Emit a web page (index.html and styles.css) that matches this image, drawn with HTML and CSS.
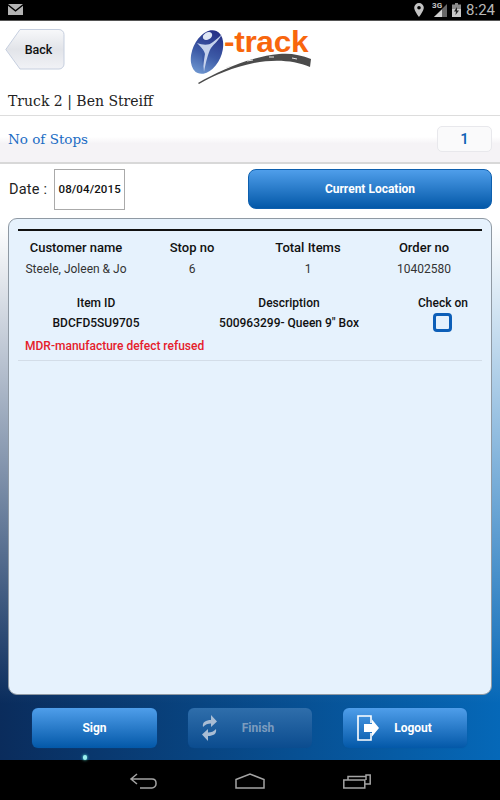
FILE: index.html
```html
<!DOCTYPE html>
<html lang="en">
<head>
<meta charset="utf-8">
<title>i-track</title>
<link rel="stylesheet" href="styles.css">
</head>
<body>
<div class="screen">
  <header class="status">
    <svg class="mail" width="15" height="12" viewBox="0 0 15 12"><path d="M0 0h15l-7.500 6z" fill="#b4b4b4"/><path d="M0 1.800l7.500 6 7.500-6V11H0z" fill="#b4b4b4"/></svg>
    <div class="status-right">
      <svg width="10" height="14" viewBox="0 0 10 14"><path fill-rule="evenodd" d="M5 0a4.800 4.800 0 0 1 4.800 4.800C9.800 8 5 14 5 14S.2 8 .2 4.800A4.800 4.800 0 0 1 5 0zm0 3a1.800 1.800 0 1 0 0 3.600A1.800 1.800 0 0 0 5 3z" fill="#c4c4c4"/></svg>
      <span class="signal"><span class="net">3G</span><svg width="13" height="13" viewBox="0 0 13 13"><path d="M13 0v13H0z" fill="#666"/><path d="M8 5.500V13H0z" fill="#d0d0d0"/></svg></span>
      <svg width="9" height="14" viewBox="0 0 9 14"><path d="M3 0h3v1.500h3V14H0V1.500h3z" fill="#8a8a8a"/><path d="M0 6h9v8H0z" fill="#c8c8c8"/><path d="M5 4L2 8.500h2L3.500 12 7 7.500H5z" fill="#222"/></svg>
      <span class="time">8:24</span>
    </div>
  </header>

  <section class="top">
    <button class="back">
      <svg class="back-shape" width="60" height="41" viewBox="0 0 60 41"><defs><linearGradient id="bk" x1="0" y1="0" x2="0" y2="1"><stop offset="0" stop-color="#f7f8fa"/><stop offset=".5" stop-color="#e2e4e9"/><stop offset="1" stop-color="#f1f2f6"/></linearGradient></defs><path d="M15 .5H54a5 5 0 0 1 5 5V35a5 5 0 0 1-5 5H15L.8 20.500z" fill="url(#bk)" stroke="#c6cfdf"/></svg>
      <span class="back-label">Back</span>
    </button>
    <div class="logo">
      <svg width="124" height="58" viewBox="0 0 124 58">
        <defs>
          <linearGradient id="orb" x1="0" y1="0" x2="0" y2="1"><stop offset="0" stop-color="#262f86"/><stop offset=".55" stop-color="#3c5aa6"/><stop offset="1" stop-color="#6d95cf"/></linearGradient>
        </defs>
        <ellipse cx="18" cy="25" rx="14.500" ry="23" transform="rotate(24 18 25)" fill="url(#orb)"/>
        <ellipse cx="18.500" cy="9" rx="5" ry="3.600" transform="rotate(-30 18.500 9)" fill="#dfe6f5"/>
        <path d="M8 16c6 2 11 3 16-1 4-3 7-6 9-8-2 5-8 10-11 14-3 5-5 14-7 24-1-8-1-14 0-19-1-4-4-7-7-10z" fill="#c5d2ec"/>
        <path d="M10.500 19c3 3 5 5 5.500 8l-2 12c-.5-7-.5-13-3.500-20z" fill="#3c5aa6"/>
        <path d="M9 56C30 44 60 30 90 27c12-1 22 1 32 5l-1 8C105 33 85 32 65 36 45 40 25 48 10 57z" fill="#4b4b4b"/>
        <path d="M37 41l5-2M58 34l6-1M80 30h5M103 31l5 1" stroke="#e8e8e8" stroke-width="1"/>
      </svg>
      <span class="logo-text">-track</span>
    </div>
  </section>

  <h1 class="title">Truck 2 | Ben Streiff</h1>

  <section class="stops">
    <span class="stops-label">No of Stops</span>
    <span class="stops-value">1</span>
  </section>

  <div class="content">
    <section class="date-row">
      <div class="date-group">
        <span class="date-label">Date :</span>
        <span class="date-input">08/04/2015</span>
      </div>
      <button class="btn btn-location">Current Location</button>
    </section>

    <main class="card">
      <div class="grid-order">
        <span class="head">Customer name</span>
        <span class="head">Stop no</span>
        <span class="head">Total Items</span>
        <span class="head">Order no</span>
        <span class="val">Steele, Joleen &amp; Jo</span>
        <span class="val">6</span>
        <span class="val">1</span>
        <span class="val">10402580</span>
      </div>
      <div class="item">
        <div class="grid-item">
          <span class="sub">Item ID</span>
          <span class="sub">Description</span>
          <span class="sub">Check on</span>
          <span class="sub">BDCFD5SU9705</span>
          <span class="sub">500963299- Queen 9" Box</span>
          <span class="check"></span>
        </div>
        <p class="defect">MDR-manufacture defect refused</p>
      </div>
    </main>

    <footer class="actions">
      <button class="btn btn-action">Sign</button>
      <button class="btn btn-action btn-off">
        <svg class="btn-icon btn-icon-sync" width="17" height="26" viewBox="0 0 17 26"><path d="M2 12C1 7 5 5 10 5V0l6 6.500-6 5.500V8.500c-3 0-6 1-8 3.500zM15 14c1 5-3 7-8 7v5l-6-6.500L7 14v3.500c3 0 6-1 8-3.500z" fill="#a9bdd4"/></svg>
        <span>Finish</span>
      </button>
      <button class="btn btn-action btn-logout">
        <svg class="btn-icon btn-icon-out" width="24" height="26" viewBox="0 0 24 26"><path d="M14 8V1H1v24h13v-7" fill="none" stroke="#fff" stroke-width="1.600"/><path d="M7 9h8V4.500L22 13l-7 8.500V17H7z" fill="#fff"/></svg>
        <span>Logout</span>
      </button>
      <span class="dot"></span>
    </footer>
  </div>

  <nav class="nav">
    <svg width="28" height="16" viewBox="0 0 28 16"><path d="M8 1L2 6l6 5M2 6h21c3 0 4 2 4 4v1c0 2-2 4-4 4H11" fill="none" stroke="#a4a4a4" stroke-width="1.500"/></svg>
    <svg width="30" height="16" viewBox="0 0 30 16"><path d="M1 6.500L15 1l14 5.500V15H1z" fill="none" stroke="#a4a4a4" stroke-width="1.500"/></svg>
    <svg width="28" height="15" viewBox="0 0 28 15"><path d="M.8 6h21v8H.8zM5 6V2.500h18V6M23 3.500V1h4.200v9h-5" fill="none" stroke="#a4a4a4" stroke-width="1.500"/></svg>
  </nav>
</div>
</body>
</html>
```

FILE: styles.css
```css
* { box-sizing: border-box; }
html, body { margin: 0; padding: 0; }
body { font-family: Roboto, "Liberation Sans", sans-serif; background: #000; }
button { font-family: inherit; border: 0; padding: 0; }

.screen { width: 500px; height: 800px; display: flex; flex-direction: column; overflow: hidden; background: #fff; }

.status { height: 21px; flex: none; background: #000; border-bottom: 1px solid #555; display: flex; align-items: center; justify-content: space-between; padding: 0 5px 1px 8px; }
.status-right { display: flex; align-items: center; gap: 5px; }
.signal { position: relative; display: block; width: 14px; height: 14px; margin-left: 4px; }
.signal svg { position: absolute; right: 0; bottom: 0; }
.net { position: absolute; left: -1px; top: -2px; font-size: 8px; font-weight: 700; line-height: 9px; color: #c8c8c8; }
.time { font-size: 15px; line-height: 18px; color: #b8b8b8; }

.top { height: 67px; flex: none; display: flex; padding: 8px 0 0 5px; position: relative; }
.back { position: relative; width: 60px; height: 41px; background: none; }
.back-shape { position: absolute; left: 0; top: 0; }
.back-label { position: relative; display: block; padding-left: 7px; font-size: 12.500px; font-weight: 500; color: #111; text-align: center; }
.logo { position: absolute; left: 189px; top: 6px; width: 124px; height: 58px; }
.logo-text { position: absolute; left: 35px; top: -1px; font-family: "Liberation Sans", sans-serif; font-weight: 700; font-size: 29px; line-height: 33px; color: #f8660d; letter-spacing: -.3px; transform: scaleX(1.09); transform-origin: left top; }

.title { margin: 0; height: 28px; flex: none; padding-left: 8px; font-family: "DejaVu Serif", serif; font-size: 14px; font-weight: 400; line-height: 27px; color: #222; border-bottom: 1px solid #ddd; }

.stops { height: 48px; flex: none; display: flex; align-items: center; justify-content: space-between; padding: 0 8px; background: linear-gradient(#fff 0, #fff 45%, #f5f3f6 60%, #f5f3f6 100%); border-bottom: 2px solid #d8d8d8; }
.stops-label { font-family: "DejaVu Serif", serif; font-size: 13.500px; color: #1a6cc4; }
.stops-value { width: 55px; height: 26px; border: 1px solid #e8e8ec; border-radius: 5px; background: #fafafb; font-size: 15px; font-weight: 500; line-height: 24px; text-align: center; color: #0d5fb5; }

.content { flex: 1; min-height: 0; display: flex; flex-direction: column; padding: 5px 8px 0; background: linear-gradient(#fff 60px, rgba(255,255,255,0) 540px), linear-gradient(90deg, #0a2c5c, #0568b8); }

.date-row { height: 41px; flex: none; display: flex; justify-content: space-between; }
.date-group { display: flex; align-items: center; gap: 7px; }
.date-label { font-size: 14.500px; line-height: 18px; padding: 1px 0 0 1px; color: #222; letter-spacing: .2px; }
.date-input { width: 71px; height: 41px; border: 1px solid #aaa; background: #fff; font-size: 11.500px; font-weight: 500; letter-spacing: .1px; line-height: 39px; text-align: center; color: #111; }

.btn { background: linear-gradient(#4f9eea, #0358a8); color: #fff; font-weight: 700; font-size: 12px; }
.btn-location { width: 244px; height: 40px; border-radius: 8px; border: 1px solid #0d5fae; }

.card { flex: 1; min-height: 0; margin-top: 8px; background: #e6f2fd; border: 1px solid #8f99a3; border-radius: 9px; padding: 10px 9px 0; }

.grid-order { border-top: 2px solid #111; display: grid; grid-template-columns: repeat(4, 1fr); grid-auto-rows: 22px; padding-top: 5px; text-align: center; align-items: center; }
.head { font-size: 13px; font-weight: 500; color: #111; }
.val { font-size: 12px; color: #333; }

.item { margin-top: 13px; border-bottom: 1px solid #d3dde8; padding-bottom: 7px; }
.grid-item { display: grid; grid-template-columns: 156px 230px 78px; grid-template-rows: 19px 21px; text-align: center; align-items: center; justify-items: center; }
.sub { font-size: 12px; font-weight: 500; color: #111; }
.check { width: 19px; height: 19px; margin-left: -2px; border: 3px solid #0d5fb8; border-radius: 4px; }
.defect { margin: 6px 0 0 7px; font-size: 12px; font-weight: 500; line-height: 14px; color: #e5202b; }

.actions { height: 65px; flex: none; position: relative; display: flex; gap: 31px; padding: 13px 0 0 24px; }
.btn-action { position: relative; flex: none; width: 124px; height: 40px; border-radius: 6px; box-shadow: 0 0 1px #0a4f95; }
.btn-action:first-child { width: 125px; }
.btn-off { background: linear-gradient(#2f6eab, #0b4c8f); color: #7c9cbe; }
.btn-off span { position: relative; left: 8px; }
.btn-logout span { position: relative; left: 8px; }
.btn-icon { position: absolute; top: 7px; }
.btn-icon-sync { left: 13px; }
.btn-icon-out { left: 14px; }
.dot { position: absolute; left: 75px; top: 60px; width: 4px; height: 5px; border-radius: 2px; background: #9cf0f0; box-shadow: 0 0 3px #6fe; }

.nav { height: 40px; flex: none; background: #000; display: flex; align-items: center; justify-content: center; gap: 78px; padding: 2px 0 0 0; }
```
